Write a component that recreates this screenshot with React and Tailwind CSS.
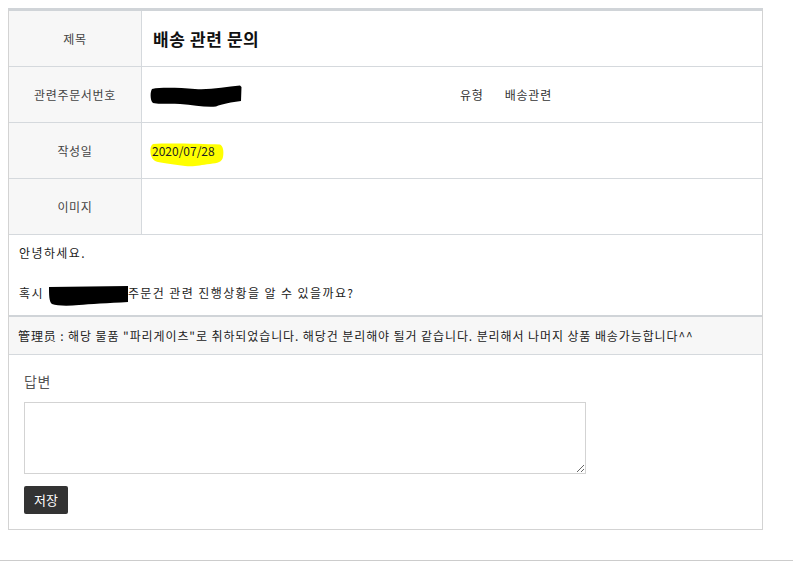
import React from 'react';

const rowCls = 'flex h-[56px] border-b border-[#d5d9dd]';
const labelCls = 'w-[133px] shrink-0 flex items-center justify-center bg-[#f7f7f7] border-r border-[#d5d9dd] text-[#444] tracking-[0.7px]';

const Redact = ({ className }) => (
  <svg viewBox="0 0 92 22" className={className}>
    <path
      d="M2,4 C12,2 30,3 45,4 C60,5 76,2 90,0.5 L91.5,2 L91,16 C82,17 72,19 66,21.5 C55,22.5 44,20 30,19 C18,18 8,19.5 3,18 C0,16 0,7 2,4 Z"
      fill="#000"
    />
  </svg>
);

export default function App() {
  return (
    <div className="min-h-[580px] bg-white text-[12px] text-[#333] font-['Noto_Sans_CJK_KR','Noto_Sans',sans-serif]">
      <div className="pt-2 pl-2 w-[763px]">
        <div className="border-x border-b border-[#d3d3d3] border-t-[3px] border-t-[#d0d4d8]">
          {/* 제목 */}
          <div className={rowCls}>
            <div className={labelCls}>제목</div>
            <div className="flex items-center pl-[11px] text-[17px] font-bold text-[#111] tracking-[0.6px]">배송 관련 문의</div>
          </div>

          {/* 주문번호 / 유형 */}
          <div className={rowCls}>
            <div className={labelCls}>관련주문서번호</div>
            <div className="flex items-center pl-[8px] tracking-[0.8px]">
              <div className="w-[310px] pt-[3px]">
                <Redact className="w-[92px] h-[22px]" />
              </div>
              <span>유형</span>
              <span className="ml-[21px]">배송관련</span>
            </div>
          </div>

          {/* 작성일 */}
          <div className={rowCls}>
            <div className={labelCls}>작성일</div>
            <div className="flex items-center pl-[10px]">
              <span className="relative leading-[16px]">
                <svg viewBox="0 0 74 24" className="absolute left-[-2px] top-[0px] w-[74px] h-[24px]">
                  <path
                    d="M3,1 C20,0 50,1 70,1.5 C73,3 74,8 73,14 C72,19 68,20 60,21 C50,22 45,24 35,23 C25,22 15,20 8,19 C3,18 1,14 0.5,10 C0,5 1,2 3,1 Z"
                    fill="#ffff00"
                  />
                </svg>
                <span className="relative text-[#222]">2020/07/28</span>
              </span>
            </div>
          </div>

          {/* 이미지 */}
          <div className={rowCls}>
            <div className={labelCls}>이미지</div>
            <div className="flex-1" />
          </div>

          {/* 본문 */}
          <div className="h-[82px] pt-[8px] pl-[10px] leading-[20px] text-[#222] tracking-[1.4px] border-b-2 border-[#d0d4d8]">
            <p>안녕하세요.</p>
            <p>&nbsp;</p>
            <p>
              혹시
              <span className="relative inline-block ml-[5px] w-[79px] h-[1px]">
                <svg viewBox="0 0 79 20" className="absolute left-0 bottom-[-8px] w-[79px] h-[20px]">
                  <path d="M0,1 L79,0 L79,16 C60,17 40,18 30,19 C20,20 8,20 3,18 C0,16 0,8 0,1 Z" fill="#000" />
                </svg>
              </span>
              주문건 관련 진행상황을 알 수 있을까요?
            </p>
          </div>

          {/* 관리자 답변 */}
          <div className="h-[38px] flex items-center pl-[9px] bg-[#f7f7f7] border-b border-[#d5d9dd] text-[#222] tracking-[0.9px]">
            管理员 : 해당 물품 "파리게이츠"로 취하되었습니다. 해당건 분리해야 될거 같습니다. 분리해서 나머지 상품 배송가능합니다^^
          </div>

          {/* 답변 작성 */}
          <div className="pt-[16px] pb-[15px] px-[15px]">
            <div className="text-[14px] leading-[20px] text-[#555] mb-[11px] tracking-[0.5px]">답변</div>
            <textarea className="block w-[562px] h-[72px] border border-[#d3d3d3] resize" />
            <button className="mt-[12px] w-[44px] h-[28px] rounded-[2px] bg-[#333] text-white text-[13px]">저장</button>
          </div>
        </div>
      </div>
      <div className="mt-[30px] border-t border-[#cccccc]" />
    </div>
  );
}
